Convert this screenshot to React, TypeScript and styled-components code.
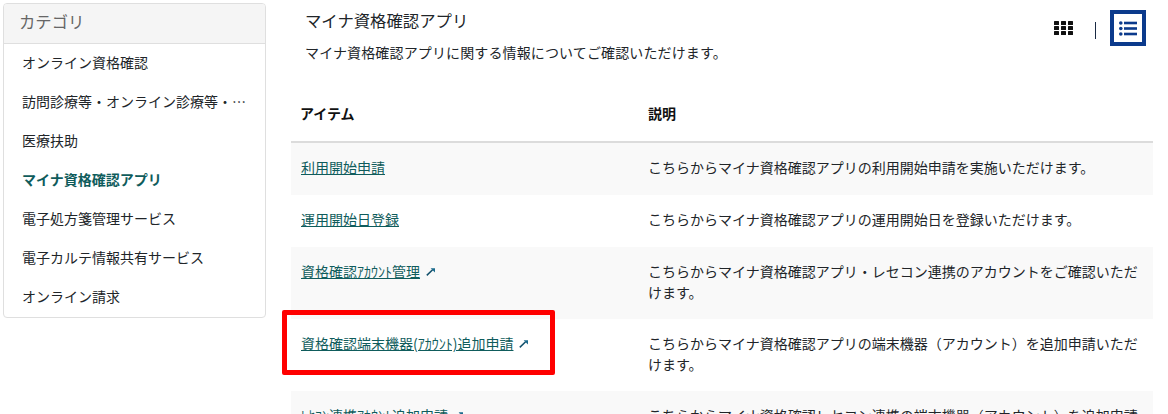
import React from "react";
import styled, {createGlobalStyle} from "styled-components";

const Global = createGlobalStyle`
  html, body {
    margin: 0;
    height: 414px;
    overflow: hidden;
    background: #fff;
  }
  body {
    font-family: "Noto Sans CJK JP", "Liberation Sans", sans-serif;
    font-size: 14px;
    color: #212529;
  }
`
const Page = styled.div`
  display: flex;
  align-items: flex-start;
  width: 1168px;
  height: 414px;
  overflow: hidden;
  position: relative;
`
const Sidebar = styled.aside`
  flex: none;
  width: 263px;
  margin: 3px 0 0 3px;
  box-sizing: border-box;
  border: 1px solid #dfdfdf;
  border-radius: 4px;
  overflow: hidden;
`
const SidebarHeader = styled.div`
  height: 39px;
  line-height: 34px;
  padding-left: 15px;
  font-size: 16.38px;
  color: #666;
  background: #f5f5f5;
  border-bottom: 1px solid #dfdfdf;
`
const SidebarItem = styled.div<{$active?: boolean}>`
  height: 39px;
  line-height: 37px;
  padding: 0 18px;
  white-space: nowrap;
  overflow: hidden;
  text-overflow: ellipsis;
  color: ${p => p.$active ? '#0f5c5c' : '#212529'};
  font-weight: ${p => p.$active ? 700 : 400};
`
const Main = styled.main`
  flex: none;
  width: 862px;
  margin-left: 25px;
`
const TopBar = styled.div`
  display: flex;
  justify-content: space-between;
  height: 87px;
`
const Heading = styled.div`
  padding: 8px 0 0 14px;
`
const Title = styled.h1`
  margin: 0;
  font-size: 16.38px;
  font-weight: 400;
  line-height: 24px;
`
const Lead = styled.p`
  margin: 9px 0 0;
  line-height: 22px;
  letter-spacing: 0.13px;
`
const Views = styled.div`
  display: flex;
  align-items: center;
  height: 36px;
  margin: 10px 7px 0 0;
`
const GridButton = styled.div`
  display: flex;
  color: #111;
`
const Divider = styled.div`
  width: 1px;
  height: 17px;
  margin: 4px 14px 0 22px;
  background: #1a2a44;
`
const ListButton = styled.div`
  display: flex;
  align-items: center;
  justify-content: center;
  box-sizing: border-box;
  width: 36px;
  height: 36px;
  border: 4px solid #0b3a8c;
  color: #0b3a8c;
`
const Table = styled.div`
  width: 862px;
`
const Row = styled.div<{$striped?: boolean; $height: number}>`
  display: grid;
  grid-template-columns: 348px 1fr;
  align-items: start;
  box-sizing: border-box;
  height: ${p => p.$height}px;
  padding: 14px 10px 0 9px;
  line-height: 21px;
  background: ${p => p.$striped ? '#f9f9f9' : '#fff'};
`
const HeadRow = styled(Row)`
  padding-top: 16px;
  border-bottom: 2px solid #dcdcdc;
  font-weight: 700;
  color: #111;
`
const ItemLink = styled.a`
  margin-left: 1px;
  color: #0f5c5c;
  display: inline-flex;
  align-items: center;
  gap: 6px;
`
const LinkLabel = styled.span`
  text-decoration: underline;
`
const Desc = styled.div`
  color: #212529;
`
const Highlight = styled.div`
  position: absolute;
  left: 282px;
  top: 310px;
  width: 273px;
  height: 65px;
  box-sizing: border-box;
  border: 5px solid #ff0000;
  border-radius: 2px;
  pointer-events: none;
`

const GridIcon = () => (
    <svg width="19" height="14" viewBox="0 0 19 14" fill="currentColor">
        {[0, 5, 10].map(y => [0, 7, 14].map(x =>
            <rect key={`${x}-${y}`} x={x} y={y} width="5" height="4" rx="0.5"/>))}
    </svg>
)
const ListIcon = () => (
    <svg width="18" height="15" viewBox="0 0 18 15" fill="currentColor">
        {[0, 5.5, 11].map(y => <g key={y}>
            <circle cx="1.8" cy={y + 2} r="1.8"/>
            <rect x="5" y={y + 0.7} width="13" height="2.6"/>
        </g>)}
    </svg>
)
const ExternalIcon = () => (
    <svg width="9" height="8" viewBox="0 0 9 8">
        <path d="M0.8 7.4 L6.6 1.8" fill="none" stroke="#12506b" strokeWidth="1.5"/>
        <path d="M4.6 0.2 H9 V4.4 Z" fill="#1a6a8c"/>
    </svg>
)

const categories = [
    'オンライン資格確認',
    '訪問診療等・オンライン診療等・オンライン資格確認',
    '医療扶助',
    'マイナ資格確認アプリ',
    '電子処方箋管理サービス',
    '電子カルテ情報共有サービス',
    'オンライン請求',
]

const rows = [
    {name: '利用開始申請', external: false, height: 52, desc: 'こちらからマイナ資格確認アプリの利用開始申請を実施いただけます。'},
    {name: '運用開始日登録', external: false, height: 52, desc: 'こちらからマイナ資格確認アプリの運用開始日を登録いただけます。'},
    {name: '資格確認ｱｶｳﾝﾄ管理', external: true, height: 72, desc: 'こちらからマイナ資格確認アプリ・レセコン連携のアカウントをご確認いただけます。'},
    {name: '資格確認端末機器(ｱｶｳﾝﾄ)追加申請', external: true, height: 72, desc: 'こちらからマイナ資格確認アプリの端末機器（アカウント）を追加申請いただけます。'},
    {name: 'ﾚｾｺﾝ連携ｱｶｳﾝﾄ追加申請', external: true, height: 72, desc: 'こちらからマイナ資格確認レセコン連携の端末機器（アカウント）を追加申請いただけます。'},
]

function App() {
    return (
        <Page>
            <Global/>
            <Sidebar>
                <SidebarHeader>カテゴリ</SidebarHeader>
                {categories.map(c =>
                    <SidebarItem key={c} $active={c === 'マイナ資格確認アプリ'}>{c}</SidebarItem>)}
            </Sidebar>
            <Main>
                <TopBar>
                    <Heading>
                        <Title>マイナ資格確認アプリ</Title>
                        <Lead>マイナ資格確認アプリに関する情報についてご確認いただけます。</Lead>
                    </Heading>
                    <Views>
                        <GridButton><GridIcon/></GridButton>
                        <Divider/>
                        <ListButton><ListIcon/></ListButton>
                    </Views>
                </TopBar>
                <Table>
                    <HeadRow $height={56}>
                        <div>アイテム</div>
                        <div>説明</div>
                    </HeadRow>
                    {rows.map((r, i) =>
                        <Row key={r.name} $striped={i % 2 === 0} $height={r.height}>
                            <div>
                                <ItemLink>
                                    <LinkLabel>{r.name}</LinkLabel>
                                    {r.external && <ExternalIcon/>}
                                </ItemLink>
                            </div>
                            <Desc>{r.desc}</Desc>
                        </Row>)}
                </Table>
            </Main>
            <Highlight/>
        </Page>
    )
}

export default App;
